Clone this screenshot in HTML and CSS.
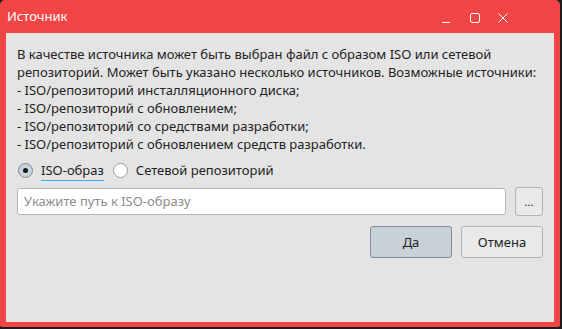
FILE: index.html
```html
<!DOCTYPE html>
<html lang="ru">
<head>
    <meta charset="UTF-8">
    <title>Источник</title>
    <link rel="stylesheet" href="styles.css">
</head>
<body>
    <div class="window">
        <div class="titlebar">
            <span class="title">Источник</span>
            <div class="controls">
                <svg class="ctl" width="12" height="12" viewBox="0 0 12 12"><path d="M1 10.5h8" stroke="#fff" stroke-width="1"/></svg>
                <svg class="ctl" width="12" height="12" viewBox="0 0 12 12"><rect x="1.5" y="1.5" width="9" height="9" rx="1.5" fill="none" stroke="#fff" stroke-width="1"/></svg>
                <svg class="ctl" width="12" height="12" viewBox="0 0 12 12"><path d="M1.5 1.5l9 9M10.5 1.5l-9 9" stroke="#fff" stroke-width="1"/></svg>
            </div>
        </div>
        <div class="content">
            <p class="info">В качестве источника может быть выбран файл с образом ISO или сетевой<br>
                репозиторий. Может быть указано несколько источников. Возможные источники:<br>
                - ISO/репозиторий инсталляционного диска;<br>
                - ISO/репозиторий с обновлением;<br>
                - ISO/репозиторий со средствами разработки;<br>
                - ISO/репозиторий с обновлением средств разработки.</p>
            <div class="radios">
                <label class="radio checked"><span class="dot"></span><span class="label focus">ISO-образ</span></label>
                <label class="radio"><span class="dot"></span><span class="label">Сетевой репозиторий</span></label>
            </div>
            <div class="path-row">
                <div class="input">Укажите путь к ISO-образу</div>
                <button class="btn small">...</button>
            </div>
            <div class="actions">
                <button class="btn default">Да</button>
                <button class="btn">Отмена</button>
            </div>
        </div>
    </div>
</body>
</html>
```

FILE: styles.css
```css
body {
    margin: 0;
    background: #1e1e1e;
    font-family: "Noto Sans", sans-serif;
    font-size: 13px;
    color: #232323;
}

.window {
    width: 560px;
    height: 327px;
    background: #f24646;
    border-radius: 5px 5px 2px 2px;
    display: flex;
    flex-direction: column;
    box-sizing: border-box;
    padding: 0 6px 5px 6px;
}

.titlebar {
    height: 33px;
    display: flex;
    align-items: center;
    justify-content: space-between;
    color: #ffffff;
    flex-shrink: 0;
}

.title {
    margin-left: 1px;
    margin-top: -1px;
}

.controls {
    display: flex;
    gap: 16px;
    margin-right: 45px;
    margin-top: 2px;
}

.content {
    flex: 1;
    background: #e4e4e4;
    padding: 12px 11px 0 11px;
}

.info {
    margin: 0;
    line-height: 18px;
}

.radios {
    display: flex;
    gap: 8px;
    margin-top: 6px;
    height: 22px;
    align-items: center;
}

.radio {
    display: flex;
    align-items: center;
}

.dot {
    width: 13px;
    height: 13px;
    border: 1px solid #9a9a9a;
    border-radius: 50%;
    background: #ffffff;
    margin: 0 8px 0 1px;
    position: relative;
}

.radio.checked .dot {
    background: #cbd4dc;
    border-color: #7d8c99;
}

.radio.checked .dot::after {
    content: "";
    position: absolute;
    width: 5px;
    height: 5px;
    border-radius: 50%;
    background: #1a1a1a;
    left: 4px;
    top: 4px;
}

.label.focus {
    border-bottom: 1px solid #3daee9;
    padding-bottom: 1px;
    margin-bottom: -2px;
}

.path-row {
    display: flex;
    gap: 9px;
    margin-top: 7px;
}

.input {
    flex: 1;
    height: 27px;
    box-sizing: border-box;
    border: 1px solid #b6b6b6;
    border-radius: 3px;
    background: #ffffff;
    color: #8c8c8c;
    padding: 0 6px;
    line-height: 25px;
}

.btn {
    font-family: "Noto Sans", sans-serif;
    font-size: 13px;
    color: #232323;
    background: #e9e9e9;
    border: 1px solid #b3b3b3;
    border-radius: 3px;
    padding: 0;
}

.btn.small {
    width: 28px;
    height: 29px;
    font-size: 11px;
    margin-top: -1px;
}

.actions {
    display: flex;
    justify-content: flex-end;
    gap: 9px;
    margin-top: 10px;
}

.actions .btn {
    width: 82px;
    height: 32px;
}

.btn.default {
    background: #c8d0d8;
    border-color: #7f8d9a;
}
```
